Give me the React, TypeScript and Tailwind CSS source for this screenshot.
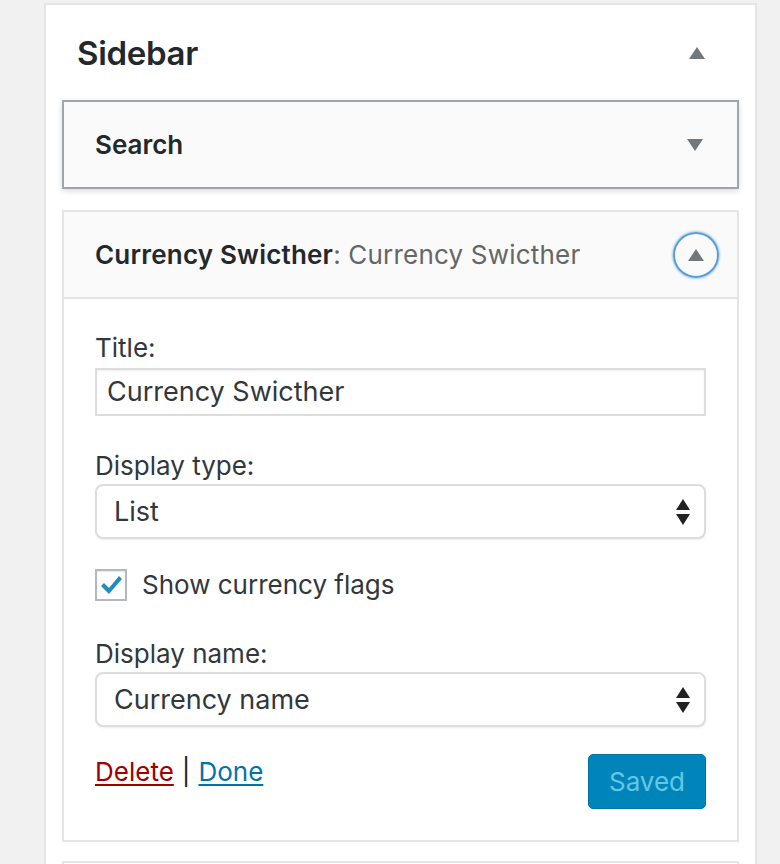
const font = { fontFamily: "Inter, 'Liberation Sans', sans-serif" };

const Tri = ({ up, className = "" }: { up?: boolean; className?: string }) => (
  <svg width="16" height="12" viewBox="0 0 16 12" className={className}>
    <path d={up ? "M8 0 L16 12 L0 12 Z" : "M0 0 L16 0 L8 12 Z"} fill="#72777c" />
  </svg>
);

const SelectArrows = () => (
  <svg width="14" height="26" viewBox="0 0 14 26">
    <path d="M7 0 L14 11 L0 11 Z" fill="#222" />
    <path d="M0 15 L14 15 L7 26 Z" fill="#222" />
  </svg>
);

const FakeSelect = ({ value }: { value: string }) => (
  <div className="mt-[4px] h-[55px] w-full rounded-[8px] border-2 border-[#dddddd] bg-white shadow-[0_1px_2px_rgba(0,0,0,0.07)] flex items-center justify-between pl-[17px] pr-[14px] text-[27px] leading-[32px] text-[#32373c]">
    <span>{value}</span>
    <SelectArrows />
  </div>
);

const App = () => {
  return (
    <div className="w-[780px] h-[864px] overflow-hidden bg-[#f1f1f1] pl-[44px] pt-[3px]" style={font}>
      <div className="w-[713px] h-[900px] bg-white border-2 border-[#e5e5e5]">
        {/* Sidebar header */}
        <div className="h-[95px] flex items-center justify-between pl-[31px] pr-[50px]">
          <h2 className="text-[33px] leading-[40px] font-semibold text-[#23282d] tracking-[-0.3px]">Sidebar</h2>
          <Tri up />
        </div>

        {/* Search widget */}
        <div className="mx-[16px] h-[89px] bg-[#fafafa] border-2 border-[#a0a5aa] shadow-[0_2px_6px_rgba(0,0,0,0.15)] flex items-center justify-between pl-[31px] pr-[34px]">
          <span className="text-[26px] leading-[32px] font-semibold text-[#23282d]">Search</span>
          <Tri />
        </div>

        {/* Currency widget */}
        <div className="mx-[16px] mt-[21px] border-2 border-[#e5e5e5] bg-white">
          <div className="h-[87px] bg-[#fafafa] border-b-2 border-[#e5e5e5] flex items-center justify-between pl-[31px] pr-[18px]">
            <span className="text-[26px] leading-[32px] text-[#23282d] tracking-[0.2px]">
              <span className="font-semibold">Currency Swicther</span>
              <span className="text-[#666666]">: Currency Swicther</span>
            </span>
            <div className="w-[46px] h-[46px] rounded-full border-2 border-[#5b9dd9] shadow-[0_0_3px_rgba(30,140,190,0.8)] flex items-center justify-center">
              <Tri up />
            </div>
          </div>

          <div className="px-[31px] pt-[34px] pb-[31px] text-[26px] text-[#32373c]">
            <div className="leading-[29px]">Title:</div>
            <div className="mt-[6px] h-[48px] w-full border-2 border-[#dddddd] shadow-[inset_0_1px_2px_rgba(0,0,0,0.07)] flex items-center pl-[10px] leading-[32px] text-[27px]">
              Currency Swicther
            </div>

            <div className="mt-[35px] leading-[29px]">Display type:</div>
            <FakeSelect value="List" />

            <div className="mt-[30px] flex items-center h-[32px]">
              <div className="w-[32px] h-[32px] border-2 border-[#b4b9be] shadow-[inset_0_1px_2px_rgba(0,0,0,0.1)] flex items-center justify-center">
                <svg width="24" height="22" viewBox="0 0 24 22">
                  <path d="M2 12 L5 9 L10 14 L20 2 L23 5 L10 20 Z" fill="#1e8cbe" />
                </svg>
              </div>
              <span className="ml-[15px] leading-[32px]">Show currency flags</span>
            </div>

            <div className="mt-[38px] leading-[29px]">Display name:</div>
            <FakeSelect value="Currency name" />

            <div className="mt-[27px] flex items-start justify-between">
              <div className="pt-[3px] leading-[29px]">
                <a href="#" className="text-[#a00000] underline underline-offset-[3px]">Delete</a>
                <span className="mx-[8px] text-[#222]">|</span>
                <a href="#" className="text-[#0073aa] underline underline-offset-[3px]">Done</a>
              </div>
              <button className="w-[118px] h-[55px] rounded-[5px] bg-[#0085ba] border border-[#0073aa] text-[#66c6e4] text-[26px] leading-[32px]">
                Saved
              </button>
            </div>
          </div>
        </div>

        <div className="mx-[16px] mt-[19px] h-[40px] border-2 border-[#e5e5e5] bg-white" />
      </div>
    </div>
  );
};

export default App;
